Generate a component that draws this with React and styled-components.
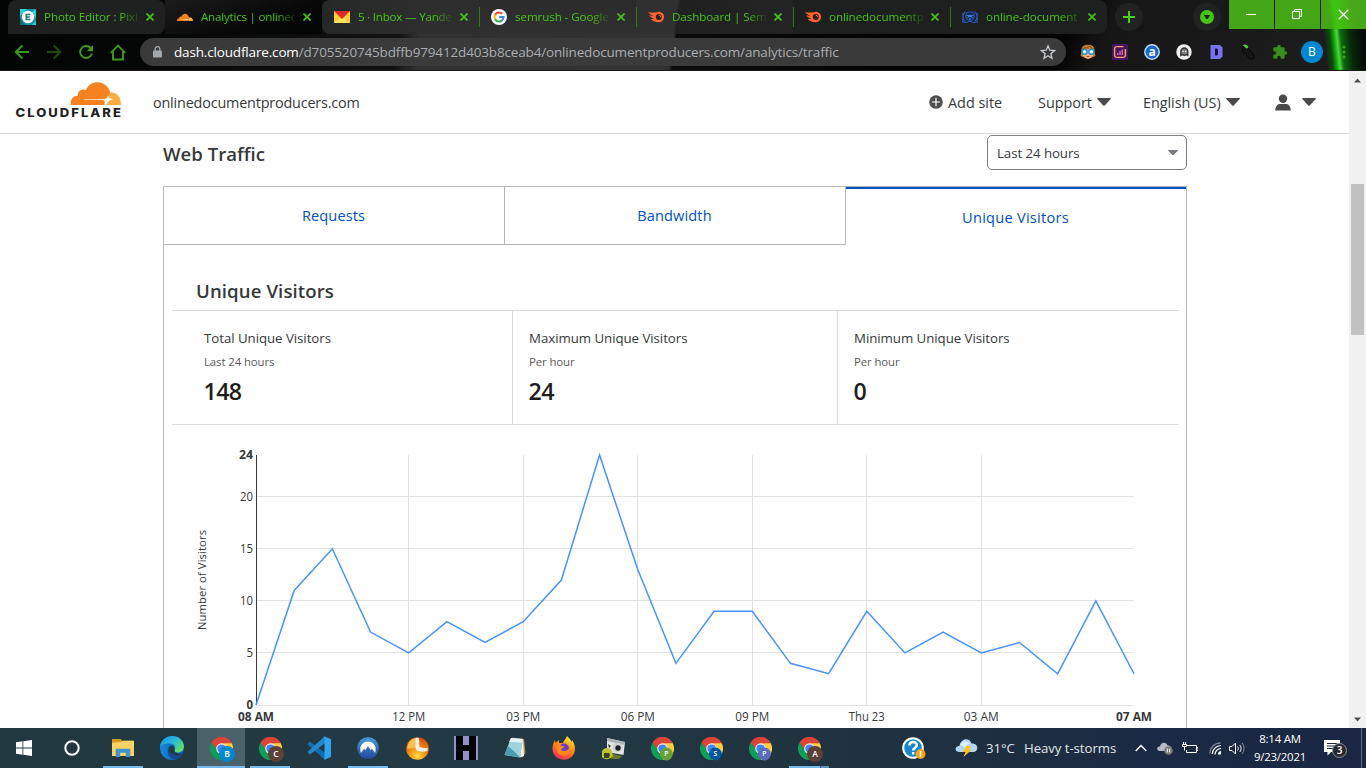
import React from "react";
import styled, { createGlobalStyle } from "styled-components";

const Global = createGlobalStyle`
  * { box-sizing: border-box; }
  html, body { margin: 0; padding: 0; overflow: hidden; }
  body { font-family: "Open Sans", "Noto Sans", sans-serif; color: #36393a; background: #fff; }
  svg { display: block; flex: none; }
`;

const Screen = styled.div`
  width: 1366px;
  height: 768px;
  display: flex;
  flex-direction: column;
  overflow: hidden;
`;

/* ---------- browser frame ---------- */
const Browser = styled.header`
  height: 71px;
  flex: none;
  display: flex;
  flex-direction: column;
  border-bottom: 1px solid #1c171b;
  background:
    linear-gradient(84deg, transparent 1320px, #0c4d0b 1326px, #12a908 1330px, #4bd93a 1333px, #0c6a0c 1337px, #082a0a 1346px, #050c06 1358px),
    linear-gradient(112deg, transparent 1000px, #161616 1040px, #1c1c1c 1240px, #161616 1330px),
    linear-gradient(98deg, #030505 0, #060707 180px, #121212 400px, #303030 420px, #333 672px, #0c0c0c 675px, #030303 900px, #050505 1366px);
`;

const TabStrip = styled.div`
  height: 34px;
  display: flex;
  padding-left: 8px;
`;

const Tab = styled.div`
  width: 157px;
  height: 34px;
  flex: none;
  display: flex;
  align-items: center;
  padding: 0 9px 0 12px;
  background: ${(p) => (p.$active ? "linear-gradient(160deg, #1c1c1c 0, #080808 60%, #030505 100%)" : p.$bg)};
  border-radius: ${(p) => p.$radius || "0"};
`;

const TabTitle = styled.span`
  width: 94px;
  margin-left: 8px;
  overflow: hidden;
  white-space: nowrap;
  font-size: 11.6px;
  line-height: 18px;
  letter-spacing: ${(p) => p.$ls || -0.08}px;
  color: #46c414;
  mask-image: linear-gradient(90deg, #000 76px, transparent 97px);
`;

const TabClose = styled.span`
  margin-left: 8px;
`;

const TabDivider = styled.span`
  width: 1px;
  height: 20px;
  margin: 7px -1px 0 0;
  flex: none;
  z-index: 1;
  background: #2f7a14;
`;

const RoundButton = styled.span`
  width: 28px;
  height: 28px;
  margin: 3px 0 0 ${(p) => p.$left}px;
  border-radius: 50%;
  background: #212323;
  display: flex;
  align-items: center;
  justify-content: center;
`;

const WindowButtons = styled.div`
  display: flex;
  gap: 1px;
  margin-left: 8px;
`;

const WindowButton = styled.span`
  width: 45px;
  height: 29px;
  display: flex;
  align-items: center;
  justify-content: center;
  padding: 0 ${(p) => (p.$bright ? 1 : 2)}px 1px 0;
  background: ${(p) => (p.$bright ? "linear-gradient(82deg,#43a517 0 10px,#3cc80f 16px,#43b813 24px,#47a71a 34px)" : "#43a517")};
`;

const Toolbar = styled.div`
  height: 36px;
  display: flex;
  align-items: center;
  padding-left: 14px;
`;

const NavIcons = styled.div`
  display: flex;
  gap: 16px;
  width: 126px;
  flex: none;
`;

const AddressBar = styled.div`
  width: 926px;
  height: 28px;
  flex: none;
  display: flex;
  align-items: center;
  padding: 0 10px 0 13px;
  border-radius: 14px;
  background: #3a3a3a;
`;

const Url = styled.span`
  flex: 1;
  margin-left: 12px;
  font-size: 13.5px;
  line-height: 20px;
  letter-spacing: -0.16px;
  color: #a9adb1;
  white-space: nowrap;
`;

const Host = styled.span`
  color: #fff;
`;

const Extensions = styled.div`
  display: flex;
  align-items: center;
  margin-left: 6px;
`;

const ExtSlot = styled.span`
  width: 32px;
  display: flex;
  justify-content: center;
`;

const Avatar = styled.span`
  width: 22px;
  height: 22px;
  border-radius: 50%;
  background: #0288d1;
  color: #fff;
  font-size: 12px;
  line-height: 22px;
  text-align: center;
`;

/* ---------- page ---------- */
const Viewport = styled.div`
  flex: 1;
  min-height: 0;
  display: flex;
`;

const Page = styled.div`
  width: 1349px;
  display: flex;
  flex-direction: column;
  overflow: hidden;
`;

const SiteHeader = styled.div`
  height: 63px;
  flex: none;
  display: flex;
  align-items: center;
  border-bottom: 1px solid #d9d9d9;
  padding-left: 15px;
`;

const Logo = styled.span`
  padding-bottom: 8px;
`;

const SiteName = styled.span`
  width: 776px;
  margin-left: 31px;
  font-size: 14.4px;
  letter-spacing: -0.18px;
`;

const HeaderItem = styled.span`
  display: flex;
  align-items: center;
  gap: ${(p) => p.$gap || 5}px;
  width: ${(p) => p.$w}px;
  font-size: 14.4px;
  letter-spacing: ${(p) => p.$ls || 0}px;
  white-space: nowrap;
`;

const Content = styled.main`
  width: 1024px;
  margin-left: 163px;
  flex: 1;
  min-height: 0;
  display: flex;
  flex-direction: column;
`;

const TitleRow = styled.div`
  height: 52px;
  flex: none;
  display: flex;
  justify-content: space-between;
  padding-top: 1px;
`;

const Title = styled.h2`
  margin: 6px 0 0;
  font-size: 18.6px;
  line-height: 26px;
  font-weight: 600;
  letter-spacing: 0;
`;

const Select = styled.div`
  width: 200px;
  height: 35px;
  display: flex;
  align-items: center;
  justify-content: space-between;
  padding: 0 8px 0 9px;
  border: 1px solid #7d7d7d;
  border-radius: 5px;
  font-size: 13.3px;
  letter-spacing: -0.08px;
`;

const Card = styled.section`
  flex: 1;
  min-height: 0;
  border: 1px solid #b6b6b6;
  border-bottom: 0;
`;

const CardTabs = styled.div`
  display: flex;
  height: 58px;
`;

const CardTab = styled.div`
  flex: 1;
  display: flex;
  align-items: center;
  justify-content: center;
  font-size: 14.6px;
  letter-spacing: ${(p) => p.$ls || 0.1}px;
  color: #0051c3;
  border-bottom: ${(p) => (p.$active ? "0" : "1px solid #b6b6b6")};
  border-top: ${(p) => (p.$active ? "2px solid #0051c3" : "0")};
  border-right: ${(p) => (p.$active ? "0" : "1px solid #b6b6b6")};
  padding: 0 1px ${(p) => (p.$active ? 0 : 2)}px 0;
`;

const SectionTitle = styled(Title)`
  margin: 33px 0 6px 32px;
  letter-spacing: 0.1px;
`;

const Stats = styled.div`
  display: grid;
  grid-template-columns: 341px 325px 340px;
  height: 115px;
  margin: 0 8px;
  border-top: 1px solid #d9d9d9;
  border-bottom: 1px solid #d9d9d9;
`;

const Stat = styled.div`
  display: flex;
  flex-direction: column;
  padding: 17px 0 0 ${(p) => (p.$first ? 32 : 16)}px;
  border-right: ${(p) => (p.$last ? "0" : "1px solid #d9d9d9")};
`;

const StatName = styled.span`
  font-size: 13.3px;
  line-height: 20px;
  letter-spacing: -0.06px;
`;

const StatPeriod = styled.span`
  margin-top: 5px;
  font-size: 11.4px;
  line-height: 17px;
  letter-spacing: -0.1px;
  color: #595959;
`;

const StatValue = styled.span`
  margin: 4px 0 0 -0.5px;
  font-size: 23.2px;
  line-height: 34px;
  font-weight: 600;
  letter-spacing: -0.6px;
  color: #1d1d1d;
`;

const ChartArea = styled.div`
  height: 303px;
`;

const Scrollbar = styled.div`
  width: 17px;
  background: #f1f1f1;
  display: flex;
  flex-direction: column;
  align-items: center;
  justify-content: space-between;
  padding: 7px 0 6px;
`;

const Track = styled.div`
  flex: 1;
  width: 13px;
  padding-top: 101px;
`;

const Thumb = styled.div`
  height: 151px;
  background: #c1c1c1;
`;

/* ---------- taskbar ---------- */
const Taskbar = styled.footer`
  height: 40px;
  flex: none;
  display: flex;
  color: #fff;
  background: linear-gradient(90deg, #22383f 0, #223a44 420px, #203440 800px, #1b2a44 1150px, #1a2642 1366px);
`;

const SystemButton = styled.span`
  width: 48px;
  display: flex;
  align-items: center;
  justify-content: center;
`;

const Apps = styled.div`
  display: flex;
  gap: 1px;
  margin-left: 3px;
`;

const AppButton = styled.span`
  position: relative;
  width: 48px;
  display: flex;
  align-items: center;
  justify-content: center;
  background: ${(p) => (p.$focused ? "#4c626a" : "transparent")};
  &::after {
    content: "";
    position: absolute;
    bottom: 0;
    height: 2px;
    left: ${(p) => (p.$focused ? 0 : 4)}px;
    right: ${(p) => (p.$focused ? 0 : 4)}px;
    background: ${(p) => (!p.$open ? "transparent" : p.$stacked ? "linear-gradient(90deg,#76b9ed 31px,#355a78 31px 32px,#5d92be 32px)" : "#76b9ed")};
  }
`;

const ProfileBadge = styled.span`
  position: absolute;
  left: 22px;
  top: 18px;
  width: 16px;
  height: 16px;
  border-radius: 50%;
  background: ${(p) => p.$color};
  font-size: 8.5px;
  font-weight: 600;
  line-height: 16px;
  text-align: center;
  transform: ${(p) => (p.$small ? "scale(0.8) translate(-2px, 0)" : "none")};
`;

const Tray = styled.div`
  flex: 1;
  display: flex;
  align-items: center;
  padding-left: 69px;
`;

const Weather = styled.span`
  display: flex;
  align-items: center;
  width: 180px;
  margin-left: 29px;
  font-size: 13.2px;
  letter-spacing: -0.05px;
  white-space: nowrap;
  color: #e2e5ea;
`;

const WeatherTemp = styled.span`
  width: 38px;
  margin-left: 7px;
`;

const TrayIcons = styled.span`
  display: flex;
  align-items: center;
  width: 111px;
`;

const TrayIcon = styled.span`
  margin-right: ${(p) => p.$gap}px;
`;

const Clock = styled.span`
  display: flex;
  flex-direction: column;
  align-items: center;
  width: 68px;
  font-size: 11.4px;
  line-height: 18px;
  letter-spacing: -0.22px;
`;

const Notifications = styled.span`
  position: relative;
  width: 24px;
  margin-left: 10px;
`;

const Count = styled.span`
  position: absolute;
  left: 8px;
  top: 3px;
  width: 15px;
  height: 15px;
  border-radius: 50%;
  border: 1px solid #8b909a;
  background: #26292e;
  font-size: 10px;
  font-weight: 600;
  line-height: 13px;
  text-align: center;
`;

const DesktopEdge = styled.span`
  align-self: stretch;
  width: 1px;
  margin-left: auto;
  margin-right: 4px;
  background: #68738a;
`;

/* ---------- icons ---------- */
const Cross = ({ color = "#46c414", size = 8, w = 1.7 }) => (
  <svg width={size} height={size} viewBox="0 0 8 8" stroke={color} strokeWidth={w}>
    <path d="M.5.5l7 7M7.5.5l-7 7" />
  </svg>
);

const Pixlr = () => (
  <svg width="16" height="16" viewBox="0 0 16 16">
    <rect width="16" height="16" fill="#13939c" />
    <path d="M0 0h7L0 7zM16 0v9l-4-6zM4 16h8l4-4v4z" fill="#28d5dc" />
    <path d="M0 9l5 7H0z" fill="#0d6c78" />
    <circle cx="8" cy="8" r="6.200" fill="#fff" />
    <path d="M10.300 5.500H6.200v5h4.100M6.200 8h3.600" fill="none" stroke="#286b75" strokeWidth="1.400" />
  </svg>
);

const CloudMini = () => (
  <svg width="16" height="16" viewBox="0 0 16 16">
    <path d="M0 12c0-1.700.800-2.600 2.200-2.700C2.200 7.800 3.600 7.300 4.500 7.800 5.500 3.600 11 3.600 12 8.300l-.500 3.700z" fill="#f6821f" />
    <path d="M11.300 12l1-3.800c2.500 0 3.700 1.500 3.700 3.800z" fill="#fbad41" />
    <path d="M4 10.500h9" stroke="#ffd8ae" strokeWidth=".6" />
  </svg>
);

const Mail = () => (
  <svg width="16" height="16" viewBox="0 0 16 16">
    <rect y="2" width="16" height="12" fill="#fc3" />
    <path d="M0 14l8-7 8 7z" fill="#ffdf5c" />
    <path d="M0 2h16L8 10z" fill="#e0292b" />
  </svg>
);

const Google = () => (
  <svg width="16" height="16" viewBox="0 0 16 16" fill="none" strokeWidth="2.100">
    <circle cx="8" cy="8" r="8" fill="#fff" />
    <path d="M11.200 4.800A4.500 4.500 0 0 0 4.100 5.800" stroke="#ea4335" />
    <path d="M4.100 5.800a4.500 4.500 0 0 0 0 4.400" stroke="#fbbc05" />
    <path d="M4.100 10.200a4.500 4.500 0 0 0 6.900 1.200" stroke="#34a853" />
    <path d="M11 11.400A4.500 4.500 0 0 0 12.500 8H8.200" stroke="#4285f4" />
  </svg>
);

const Semrush = () => (
  <svg width="16" height="16" viewBox="0 0 16 16">
    <path d="M0 3.200c4 .4 7 .3 10-.3 3.600-.4 6 2.100 6 5 0 3.200-2.600 5.400-5.300 5.400-3.700 0-6.300-1.700-8-3.400 1.500.3 2.800.2 3.400-.1C4 9.200 2.100 7.600 1.200 6.300c1.600.5 3.200.5 3.900.2C3 5.800 1.200 4.500 0 3.200z" fill="#ff622d" />
    <circle cx="10.800" cy="8" r="3" fill="#32201b" />
    <path d="M10.800 6.200A1.900 1.900 0 0 1 12.700 8" stroke="#ff622d" fill="none" />
  </svg>
);

const BlueCrest = () => (
  <svg width="16" height="16" viewBox="0 0 16 16" fill="none" stroke="#2859bc" strokeWidth="1.100">
    <path d="M3.500 2.500C.2 5 .2 9.500 3 12M12.500 2.500c3.300 2.500 3.300 7 .5 9.500M.8 4v9.200h3M15.200 4v9.200h-3M3 13.800l5-1.500 5 1.500" />
    <circle cx="8" cy="7" r="4.300" fill="#12264e" />
    <path d="M4.500 6.500h7M5.500 9l1-1.500h3l1 1.500M8 9v2" stroke="#3f78e0" />
  </svg>
);

const NavBack = ({ dim }) => (
  <svg width="16" height="16" viewBox="0 0 16 16" fill="none" stroke={dim ? "#1d4d10" : "#3d9a1c"} strokeWidth="1.900">
    <path d={dim ? "M1 8h13M7.700 1.500L14.200 8l-6.500 6.500" : "M15 8H2M8.300 1.500L1.800 8l6.500 6.500"} />
  </svg>
);

const Reload = () => (
  <svg width="16" height="16" viewBox="0 0 16 16">
    <path d="M12.700 4A6 6 0 1 0 14 9.500" fill="none" stroke="#3d9a1c" strokeWidth="1.900" />
    <path d="M15 1v6.300H8.700z" fill="#3d9a1c" />
  </svg>
);

const Home = () => (
  <svg width="16" height="17" viewBox="0 0 16 17" fill="none" stroke="#3d9a1c" strokeWidth="1.900">
    <path d="M.8 8.800L8 1.600l7.200 7.200M3 7v8.500h10V7" />
  </svg>
);

const Lock = () => (
  <svg width="9" height="12" viewBox="0 0 9 12">
    <path d="M2.200 5V3a2.300 2.300 0 0 1 4.600 0v2" fill="none" stroke="#a2a7ad" strokeWidth="1.300" />
    <rect y="4.500" width="9" height="7" rx="1" fill="#a2a7ad" />
  </svg>
);

const Star = () => (
  <svg width="16" height="16" viewBox="0 0 24 24" fill="none" stroke="#c6cacf" strokeWidth="2">
    <path d="M12 2.800l2.700 6.500 7 .6-5.300 4.600 1.600 6.900-6-3.700-6 3.700 1.600-6.900L2.300 9.900l7-.6z" />
  </svg>
);

const Owl = () => (
  <svg width="16" height="16" viewBox="0 0 16 16">
    <path d="M1.500 7C1 2.500 4 .8 8 .8S15 2.500 14.500 7l1 5-2.500 1-5 2.200L3 13l-2.500-1z" fill="#c07a30" />
    <path d="M3 7c1-2 9-2 10 0v4.500c-2 4-8 4-10 0z" fill="#efb580" />
    <path d="M2.500 4.500c3-.5 6-1 7.500-2.500.5 2 2 2.500 3.500 2.800" stroke="#8a4d1b" fill="none" />
    <circle cx="4.600" cy="7.800" r="2.500" fill="#f0f8fc" stroke="#2492d1" strokeWidth="1.500" />
    <circle cx="11.400" cy="7.800" r="2.500" fill="#f0f8fc" stroke="#2492d1" strokeWidth="1.500" />
    <path d="M6.500 12.500h3" stroke="#a3522b" />
  </svg>
);

const Bars = () => (
  <svg width="16" height="16" viewBox="0 0 16 16" fill="none">
    <rect width="16" height="16" rx="1.500" fill="#4a1657" />
    <path d="M11.500 2.600h-7A2 2 0 0 0 2.600 4.500v7a2 2 0 0 0 1.900 1.900h7a2 2 0 0 0 1.900-1.900V5" stroke="#f4a17b" strokeWidth="1.400" />
    <path d="M5.700 11V9M8 11V7M10.300 11V5.500" stroke="#e86fae" strokeWidth="1.300" />
  </svg>
);

const Circled = ({ fill, ring, color, letter }) => (
  <svg width="16" height="16" viewBox="0 0 16 16">
    <circle cx="8" cy="8" r="7.200" fill={fill} stroke={ring} strokeWidth="1.500" />
    <text x="8" y="11.800" textAnchor="middle" fontFamily="Open Sans" fontWeight="700" fontSize="12" fill={color}>{letter}</text>
  </svg>
);

const Ghost = () => (
  <svg width="16" height="16" viewBox="0 0 16 16">
    <circle cx="8" cy="8" r="7.700" fill="#efefef" />
    <path d="M4.800 11.500V7.500a3.500 3.500 0 0 1 7 0v4l-1.800-.8-1.700.8-1.700-.8z" fill="#777" stroke="#333" strokeWidth="1.300" />
    <path d="M6.500 7.500h1.300M9 7.500h1.300" stroke="#eee" strokeWidth="1.500" />
  </svg>
);

const PurpleD = () => (
  <svg width="13" height="16" viewBox="0 0 13 16">
    <path d="M.5 1H10l2.500 2.500v9L10 15H.5z" fill="#7b70f2" />
    <path d="M5 4.500h2l1 1v5l-1 1H5z" fill="#17123d" />
  </svg>
);

const Mouse = () => (
  <svg width="16" height="16" viewBox="0 0 16 16">
    <path d="M3 3c2-2 4-.8 6 2l5 6c2 3-2 5.500-4.500 3.500L3.500 8C2 6 1.500 4.500 3 3z" fill="#151515" stroke="#060606" />
    <path d="M3 1.500C4.500-.5 7 1 8.500 3L6.800 4.800z" fill="#43e12b" />
  </svg>
);

const Puzzle = () => (
  <svg width="16" height="16" viewBox="0 0 24 24">
    <path d="M20.500 11H19V7a2 2 0 0 0-2-2h-4V3.500a2.500 2.500 0 0 0-5 0V5H4a2 2 0 0 0-2 2v3.800h1.500a2.700 2.700 0 0 1 0 5.400H2V20c0 1.100.9 2 2 2h3.800v-1.500a2.700 2.700 0 0 1 5.400 0V22H17a2 2 0 0 0 2-2v-4h1.500a2.500 2.500 0 0 0 0-5z" fill="#3a8e1d" />
  </svg>
);

const Dots = () => (
  <svg width="4" height="14" viewBox="0 0 4 14" fill="#3ea01a">
    <circle cx="2" cy="2" r="1.500" /><circle cx="2" cy="7" r="1.500" /><circle cx="2" cy="12" r="1.500" />
  </svg>
);

const CloudflareLogo = () => (
  <svg width="107" height="40" viewBox="0 0 107 40" overflow="visible">
    <path d="M55.800 27c-.6-5.500 2-9 7-9.200-.3-4.700 4.200-7.900 8-5.500C73.200 6.500 77.500 4.200 82.500 4.200c6.700 0 12 5 12.700 11l-.8 4.500L91 27z" fill="#f6821f" />
    <path d="M95.300 14.500c6.300-.8 10.900 4.500 10.700 12.500H90.500l2-6z" fill="#fbad41" />
    <path d="M69 21.200h19.500c2.800 0 4-1.200 4.600-4.100.5 2.600 1.600 4 5.900 4.100-3.500.2-5.700 1.600-7.600 5.800h-2c.8-3.500.2-4.800-2.900-4.900L69 21.800z" fill="#fff" />
    <text x=".500" y="39.300" textLength="107.500" lengthAdjust="spacingAndGlyphs" fontFamily="Inter, sans-serif" fontWeight="800" fontSize="11.600" letterSpacing="1.800" fill="#222">CLOUDFLARE</text>
  </svg>
);

const Caret = ({ w = 14, h = 8, color = "#4a4a4a" }) => (
  <svg width={w} height={h} viewBox="0 0 14 8" preserveAspectRatio="none">
    <path d="M.8 0h12.400c.7 0 1 .6.500 1.100L7.700 7.600a1 1 0 0 1-1.400 0L.3 1.100C-.200.6.100 0 .8 0z" fill={color} />
  </svg>
);

const PlusDisc = () => (
  <svg width="14" height="14" viewBox="0 0 14 14">
    <circle cx="7" cy="7" r="6.800" fill="#4d4d4d" />
    <path d="M7 2.800v8.400M2.800 7h8.400" stroke="#fff" strokeWidth="1.200" />
  </svg>
);

const Person = () => (
  <svg width="16" height="17" viewBox="0 0 16 17" fill="#4a4a4a">
    <circle cx="8" cy="4.800" r="4.200" />
    <path d="M.3 16.500c0-4.500 2.600-6.400 5-6.400h5.400c2.400 0 5 1.900 5 6.400z" />
  </svg>
);

const ScrollArrow = ({ down }) => (
  <svg width="7" height="5" viewBox="0 0 7 5">
    <path d={down ? "M0 .5h7L3.500 4.500z" : "M0 4.500h7L3.500.5z"} fill="#505050" />
  </svg>
);

const Windows = () => (
  <svg width="16" height="16" viewBox="0 0 16 16" fill="#fff">
    <path d="M0 2.200l6.500-.9v6.300H0zM7.300 1.200L16 0v7.600H7.300zM0 8.400h6.500v6.300L0 13.800zM7.300 8.400H16V16l-8.700-1.200z" />
  </svg>
);

const Cortana = () => (
  <svg width="16" height="16" viewBox="0 0 16 16">
    <circle cx="8" cy="8" r="6.700" fill="none" stroke="#fff" strokeWidth="2" />
  </svg>
);

const Folder = () => (
  <svg width="22" height="20" viewBox="0 0 22 20">
    <path d="M0 1h8.500l1.500 1.700h11V6H0z" fill="#d8971d" />
    <path d="M0 4.700L8.500 4l2-1.300H22V18H0z" fill="#fbd364" />
    <path d="M3.700 19v-8.200h14.600V19h-4.500v-4.200H8.200V19z" fill="#3f93d1" />
  </svg>
);

const Edge = () => (
  <svg width="24" height="24" viewBox="0 0 24 24">
    <defs>
      <linearGradient id="edgeTop" x1="0" x2="1" y1="0" y2=".7"><stop offset="0" stopColor="#1b8fe0" /><stop offset=".5" stopColor="#27b5df" /><stop offset="1" stopColor="#62e06a" /></linearGradient>
      <linearGradient id="edgeLow" x1="0" x2="1"><stop offset="0" stopColor="#1687dd" /><stop offset="1" stopColor="#0b55a5" /></linearGradient>
    </defs>
    <circle cx="12" cy="12" r="12" fill="url(#edgeLow)" />
    <path d="M0 11C1 4 6 0 12.300 0 19 0 24 5 24 10.500c0 3.800-2.700 6-6 6-2.500 0-4.300-1-3.500-2.300 1.300-2 .9-6.200-4-6.700C5.500 7 1.500 8 0 11z" fill="url(#edgeTop)" />
    <path d="M8.500 13c-.6 5 4.500 8.500 9.500 7 2-.6 3.600-1.200 4.400-2-1.200-.4-7 .6-7.900-3.800C15 12 13.500 9.500 11.500 9.800 9.800 10 8.700 11.300 8.500 13z" fill="#223a44" />
    <path d="M8.300 12C6 18 10 23.500 15 23.600c3-1 5.700-3 7.300-5.600-4.500 3.600-13 1.300-14-6z" fill="#174b91" />
  </svg>
);

const Chrome = () => (
  <svg width="23" height="23" viewBox="0 0 24 24">
    <path d="M1.600 6A12 12 0 0 1 22.400 6L12 8.500 7.500 15z" fill="#db4437" />
    <path d="M22.400 6A12 12 0 0 1 12 24l-1-6.500L16.500 9 12 6.500z" fill="#ffcd40" />
    <path d="M1.600 6A12 12 0 0 0 12 24l5.200-9-8 1z" fill="#0f9d58" />
    <path d="M12 6.500h10.700a12 12 0 0 0-.3-.5A12 12 0 0 0 2 5.500z" fill="#db4437" />
    <circle cx="12" cy="12" r="5.500" fill="#f1f1f1" />
    <circle cx="12" cy="12" r="4.300" fill="#4285f4" />
  </svg>
);

const VSCode = () => (
  <svg width="24" height="24" viewBox="0 0 24 24">
    <path d="M18 24v-7L3 5.500.3 8z" fill="#1070b3" />
    <path d="M18 0v7L3 18.500.3 16z" fill="#2489ca" />
    <path d="M17.500.2l6.500 3v17.600l-6.500 3z" fill="#2fa4f2" />
  </svg>
);

const NordVpn = () => (
  <svg width="22" height="22" viewBox="0 0 22 22">
    <defs><linearGradient id="nord" x1="0" x2="0" y1="0" y2="1"><stop offset="0" stopColor="#4b9bd2" /><stop offset="1" stopColor="#2447a0" /></linearGradient></defs>
    <circle cx="11" cy="11" r="10.800" fill="url(#nord)" />
    <path d="M4 16C1.500 9 6 4.500 11 4.500S20.500 9 18 16l-3-4.500-1.200 1.700L11 9l-2.800 4.200L7 11.500z" fill="#fff" />
  </svg>
);

const OrangeClock = () => (
  <svg width="23" height="23" viewBox="0 0 23 23">
    <defs><radialGradient id="orb" cx=".5" cy=".85" r=".8"><stop offset="0" stopColor="#ffdc43" /><stop offset=".5" stopColor="#f58c12" /><stop offset="1" stopColor="#d94f0a" /></radialGradient></defs>
    <circle cx="11.500" cy="11.500" r="11.300" fill="url(#orb)" />
    <path d="M1.500 12C1 5 6 1 10 1.300v9.200z" fill="#ffbf50" />
    <path d="M9.500 1c1.300-.4 2.500-.3 3.500 0l.5 9c2.500 1.300 5.500 1.300 8 .8.3 1.200.2 2-.2 3.200-4 1-8 .8-10.300-.5-1.500-1-1.500-2.500-1.500-4.500z" fill="#f4f0ee" />
  </svg>
);

const LetterH = () => (
  <svg width="24" height="24" viewBox="0 0 24 24">
    <rect width="24" height="24" fill="#9490cb" />
    <path d="M2 0h7v9h6V0h7v24h-7v-9H9v9H2z" fill="#050507" />
  </svg>
);

const Notepad = () => (
  <svg width="24" height="24" viewBox="0 0 24 24">
    <path d="M9 1.500L21 3l1.500 14L19 22z" fill="#b68d55" />
    <path d="M8 2l12 1-3 18.500L1.500 19z" fill="#9ed3de" />
    <path d="M8 2l12 1-1 3.500L6 6z" fill="#e4f2f5" />
    <path d="M5 10l8 7 4 4.500L1.500 19z" fill="#4c9db2" />
    <path d="M20 3l1 17-4 1.500z" fill="#f1f4f4" />
  </svg>
);

const Firefox = () => (
  <svg width="24" height="24" viewBox="0 0 24 24">
    <defs><linearGradient id="fox" x1=".8" x2=".3" y1="0" y2="1"><stop offset="0" stopColor="#fff44f" /><stop offset=".4" stopColor="#ff980e" /><stop offset="1" stopColor="#f5295b" /></linearGradient></defs>
    <path d="M3 4l.5 3L7 4v3h4c1-3 3-4 4-7 2 2 4 4 4.500 6l.5-2c3 4 3.500 8 2.500 12-1.500 5-6 7.700-10.500 7.700C5.500 23.700.5 19 .5 13 .5 9 1.500 6.500 3 4z" fill="url(#fox)" />
    <circle cx="12" cy="12.500" r="5" fill="#6b3fd0" />
    <path d="M4.500 10c3-2 5 0 8 .5-1 2-2.500 1.500-3.500 3 2 3 7 1.500 8.500-2 .5 5-2.500 8-6 8C7 19.500 4 15 4.500 10z" fill="#ff8b16" />
  </svg>
);

const Camera = () => (
  <svg width="25" height="24" viewBox="0 0 25 24">
    <path d="M6 2l18 4-1.500 13L6 16z" fill="#e2e3e4" />
    <path d="M6 2l18 4-.5 3L6 5z" fill="#aeb1b3" />
    <circle cx="16.500" cy="11.500" r="4.800" fill="#cfd1d3" />
    <circle cx="17" cy="12" r="2.700" fill="#202326" />
    <path d="M7 8l3 2-2 2z" fill="#333" />
    <path d="M12 18l9 2-3 3h-8z" fill="#6d7728" />
    <path d="M1 15c2-4 8-4 10 0l1 5c-3 4-9 4-11 1z" fill="#bdc532" />
    <path d="M3 17h5l1 1.500-1 3.500H3z" fill="#3b4319" />
  </svg>
);

const Help = () => (
  <svg width="24" height="23" viewBox="0 0 24 23">
    <circle cx="11" cy="11" r="9.800" fill="#1686ca" stroke="#fff" strokeWidth="2" />
    <path d="M7.500 8.500C7.500 3.800 14.800 4 14.800 8c0 2.800-3.600 2.500-3.600 5.500M11.200 15v2.500" fill="none" stroke="#fff" strokeWidth="2.500" />
    <circle cx="18.500" cy="17" r="5" fill="#f2a51e" />
    <path d="M18.500 14v6" stroke="#fff4d0" strokeWidth="1.500" />
  </svg>
);

const Storm = () => (
  <svg width="24" height="20" viewBox="0 0 24 20">
    <path d="M5.500 14C-1.500 14.500-.500 7.500 4.500 8 5.500-.5 15-.8 16.500 5.500c7.500-.5 7.500 8.500 1.500 8.500z" fill="#b3d6f5" />
    <path d="M5 8c2-5 7-6 10-2-4 0-4 3-5 4-1-2-3-3-5-2z" fill="#e4f1fc" />
    <path d="M11.500 8H16l-2 3.500h3L8.500 19l2-5H7.700z" fill="#ffc021" />
  </svg>
);

const ChevronUp = () => (
  <svg width="12" height="8" viewBox="0 0 12 8"><path d="M.7 7L6 1.500 11.300 7" fill="none" stroke="#fff" strokeWidth="1.300" /></svg>
);

const OneDrive = () => (
  <svg width="17" height="13" viewBox="0 0 17 13">
    <path d="M3 9C-1 9-.5 4 3 4.500 4-.5 9.500 0 10.500 3.500 14 3 15 6 14.500 9z" fill="#b9bdc3" />
    <circle cx="11.500" cy="8.500" r="4.300" fill="#77797c" />
    <path d="M10.300 6.500v4M12.700 6.500v4" stroke="#fff" />
  </svg>
);

const Battery = () => (
  <svg width="16" height="13" viewBox="0 0 16 13" fill="none" stroke="#fff" strokeWidth="1">
    <path d="M5 3.500h9.500v7h-10V8M14.500 5.500H16v3h-1.500M1.500 0v2M3.500 0v2M.5 2.500h4v2h-4zM2.500 4.500v4" />
  </svg>
);

const Wifi = () => (
  <svg width="13" height="13" viewBox="0 0 13 13" fill="none" strokeWidth="1.200">
    <path d="M.8 11.500C1 5.500 5.500 1 11.700.8" stroke="#7e8799" />
    <path d="M3.300 12C3.500 7.500 7 3.800 12 3.500M6 12.500C6 9.500 8.500 6.700 12 6.500" stroke="#fff" />
    <path d="M12 9a3 3 0 0 0-3 3.500h3z" fill="#fff" />
  </svg>
);

const Volume = () => (
  <svg width="17" height="13" viewBox="0 0 17 13" fill="none" stroke="#fff" strokeWidth="1">
    <path d="M.5 4.500H3L6.500 1v11L3 8.500H.5zM8.500 4.500c1 1.200 1 2.800 0 4M10.800 3c1.700 2 1.700 5 0 7" />
    <path d="M13 1c2.700 3 2.700 8 0 11" stroke="#8991a2" />
  </svg>
);

const Message = () => (
  <svg width="17" height="17" viewBox="0 0 17 17">
    <path d="M0 0h16v12H7l-3.500 3.500V12H0z" fill="#fff" />
    <path d="M3 3.500h10M3 6h10M3 8.500h6" stroke="#1b2742" />
  </svg>
);

/* ---------- chart ---------- */
const visitors = [0, 11, 15, 7, 5, 8, 6, 8, 12, 24, 13, 4, 9, 9, 4, 3, 9, 5, 7, 5, 6, 3, 10, 3];
const hours = [
  { i: 0, label: "08 AM", w: 36, bold: true },
  { i: 4, label: "12 PM", w: 33 },
  { i: 7, label: "03 PM", w: 34 },
  { i: 10, label: "06 PM", w: 34 },
  { i: 13, label: "09 PM", w: 34 },
  { i: 16, label: "Thu 23", w: 36 },
  { i: 19, label: "03 AM", w: 35 },
  { i: 23, label: "07 AM", w: 36, bold: true },
];
const left = 92;
const bottom = 280;
const xAt = (i) => left + (i * 878) / 23;
const yAt = (v) => bottom - (v * 250) / 24;

const Chart = () => (
  <svg width="1022" height="303" viewBox="0 0 1022 303" fontFamily="Open Sans, sans-serif" fontSize="11.800" fill="#36393a">
    <g stroke="#e2e2e2" shapeRendering="crispEdges">
      {[0, 5, 10, 15, 20].map((v) => <path key={v} d={`M${left} ${Math.floor(yAt(v)) + 0.5}H970`} />)}
      {hours.slice(1, -1).map(({ i }) => <path key={i} d={`M${Math.floor(xAt(i)) + 0.5} 30V280`} />)}
      <path d="M92.500 30V280" stroke="#36393a" />
    </g>
    <polyline points={visitors.map((v, i) => `${xAt(i)},${yAt(v)}`).join(" ")} fill="none" stroke="#4693ff" strokeWidth="1.500" />
    {[0, 5, 10, 15, 20, 24].map((v) => (
      <text key={v} x="89" y={yAt(v) + 4} textAnchor="end" textLength={v === 24 ? 14 : v > 9 ? 13 : 6.5} lengthAdjust="spacingAndGlyphs" fontWeight={v % 24 ? 400 : 700}>{v}</text>
    ))}
    {hours.map(({ i, label, w, bold }) => (
      <text key={i} x={xAt(i)} y="296" textAnchor="middle" textLength={w} lengthAdjust="spacingAndGlyphs" fontWeight={bold ? 700 : 400}>{label}</text>
    ))}
    <text transform="translate(42 155) rotate(-90)" textAnchor="middle" fontSize="11.200" textLength="100" lengthAdjust="spacing">Number of Visitors</text>
  </svg>
);

const grey = "linear-gradient(180deg, #2b2b2b, #303030)";
const tabs = [
  { icon: <Pixlr />, title: "Photo Editor : Pixl", bg: "#1f2020", radius: "8px 8px 8px 0" },
  { icon: <CloudMini />, title: "Analytics | onlinec", active: true, ls: -0.22 },
  { icon: <Mail />, title: "5 · Inbox — Yande", bg: "linear-gradient(100deg, #262727, #2e2e2e 70%)", radius: "8px 0 0 8px", divider: true, ls: -0.22 },
  { icon: <Google />, title: "semrush - Google", bg: grey, divider: true },
  { icon: <Semrush />, title: "Dashboard | Sem", bg: "linear-gradient(98deg, #303030 41px, #202020 44px, #242424)", divider: true },
  { icon: <Semrush />, title: "onlinedocumentp", bg: "#1e1f1f", divider: true },
  { icon: <BlueCrest />, title: "online-document", bg: "#1e1f1f", radius: "0 8px 8px 0" },
];

const apps = [
  { icon: <Folder />, open: true },
  { icon: <Edge /> },
  { icon: <Chrome />, open: true, focused: true, badge: ["B", "#0288d1"] },
  { icon: <Chrome />, open: true, badge: ["C", "#5d4037"] },
  { icon: <VSCode /> },
  { icon: <NordVpn />, open: true },
  { icon: <OrangeClock /> },
  { icon: <LetterH /> },
  { icon: <Notepad /> },
  { icon: <Firefox /> },
  { icon: <Camera /> },
  { icon: <Chrome />, badge: ["P", "#689f38"], small: true },
  { icon: <Chrome />, badge: ["S", "#01579b"], small: true },
  { icon: <Chrome />, badge: ["P", "#5c6bc0"], small: true },
  { icon: <Chrome />, open: true, stacked: true, badge: ["A", "#5d4037"] },
];

const trayIcons = [
  [<ChevronUp />, 10],
  [<OneDrive />, 8],
  [<Battery />, 11],
  [<Wifi />, 7],
  [<Volume />, 0],
];

const stats = [
  { name: "Total Unique Visitors", period: "Last 24 hours", value: 148 },
  { name: "Maximum Unique Visitors", period: "Per hour", value: 24 },
  { name: "Minimum Unique Visitors", period: "Per hour", value: 0 },
];

const extensions = [
  <Owl />, <Bars />, <Circled fill="#1868cc" ring="#b9dcf5" color="#fff" letter="a" />, <Ghost />,
  <PurpleD />, <Mouse />, <Puzzle />, <Avatar>B</Avatar>, <Dots />,
];

export default function App() {
  return (
    <Screen>
      <Global />
      <Browser>
        <TabStrip>
          {tabs.map((t, i) => (
            <React.Fragment key={i}>
              <Tab $active={t.active} $bg={t.bg} $radius={t.radius}>
                {t.icon}
                <TabTitle $ls={t.ls}>{t.title}</TabTitle>
                <TabClose><Cross /></TabClose>
              </Tab>
              {t.divider && <TabDivider />}
            </React.Fragment>
          ))}
          <RoundButton $left={8}>
            <svg width="12" height="12" viewBox="0 0 12 12" stroke="#4bd313" strokeWidth="2"><path d="M6 0v12M0 6h12" /></svg>
          </RoundButton>
          <RoundButton $left={50}>
            <svg width="14" height="14" viewBox="0 0 14 14"><circle cx="7" cy="7" r="7" fill="#45c414" /><path d="M4.500 5.500h5L7 9z" fill="#182315" stroke="#182315" /></svg>
          </RoundButton>
          <WindowButtons>
            <WindowButton><svg width="10" height="1"><path d="M0 .5h10" stroke="#fff" /></svg></WindowButton>
            <WindowButton><svg width="10" height="10" viewBox="0 0 10 10" fill="none" stroke="#fff"><path d="M.5 2.500h7v7h-7zM2.500 2.500v-2h7v7h-2" /></svg></WindowButton>
            <WindowButton $bright><Cross color="#fff" size={11} w={0.9} /></WindowButton>
          </WindowButtons>
        </TabStrip>
        <Toolbar>
          <NavIcons><NavBack /><NavBack dim /><Reload /><Home /></NavIcons>
          <AddressBar>
            <Lock />
            <Url><Host>dash.cloudflare.com</Host>/d705520745bdffb979412d403b8ceab4/onlinedocumentproducers.com/analytics/traffic</Url>
            <Star />
          </AddressBar>
          <Extensions>{extensions.map((e, i) => <ExtSlot key={i}>{e}</ExtSlot>)}</Extensions>
        </Toolbar>
      </Browser>

      <Viewport>
        <Page>
          <SiteHeader>
            <Logo><CloudflareLogo /></Logo>
            <SiteName>onlinedocumentproducers.com</SiteName>
            <HeaderItem $w={109}><PlusDisc />Add site</HeaderItem>
            <HeaderItem $w={105}>Support<Caret /></HeaderItem>
            <HeaderItem $w={132} $ls={-0.05}>English (US)<Caret /></HeaderItem>
            <HeaderItem $w={60} $gap={11}><Person /><Caret /></HeaderItem>
          </SiteHeader>
          <Content>
            <TitleRow>
              <Title>Web Traffic</Title>
              <Select>Last 24 hours<Caret w={10} h={5.5} color="#777b80" /></Select>
            </TitleRow>
            <Card>
              <CardTabs>
                <CardTab>Requests</CardTab>
                <CardTab>Bandwidth</CardTab>
                <CardTab $active $ls={0.25}>Unique Visitors</CardTab>
              </CardTabs>
              <SectionTitle>Unique Visitors</SectionTitle>
              <Stats>
                {stats.map((s, i) => (
                  <Stat key={s.name} $first={i === 0} $last={i === 2}>
                    <StatName>{s.name}</StatName>
                    <StatPeriod>{s.period}</StatPeriod>
                    <StatValue>{s.value}</StatValue>
                  </Stat>
                ))}
              </Stats>
              <ChartArea><Chart /></ChartArea>
            </Card>
          </Content>
        </Page>
        <Scrollbar>
          <ScrollArrow />
          <Track><Thumb /></Track>
          <ScrollArrow down />
        </Scrollbar>
      </Viewport>

      <Taskbar>
        <SystemButton><Windows /></SystemButton>
        <SystemButton><Cortana /></SystemButton>
        <Apps>
          {apps.map((a, i) => (
            <AppButton key={i} $open={a.open} $focused={a.focused} $stacked={a.stacked}>
              {a.icon}
              {a.badge && <ProfileBadge $color={a.badge[1]} $small={a.small}>{a.badge[0]}</ProfileBadge>}
            </AppButton>
          ))}
        </Apps>
        <Tray>
          <Help />
          <Weather><Storm /><WeatherTemp>31°C</WeatherTemp>Heavy t-storms</Weather>
          <TrayIcons>
            {trayIcons.map(([icon, gap], i) => <TrayIcon key={i} $gap={gap}>{icon}</TrayIcon>)}
          </TrayIcons>
          <Clock><span>8:14 AM</span><span>9/23/2021</span></Clock>
          <Notifications><Message /><Count>3</Count></Notifications>
          <DesktopEdge />
        </Tray>
      </Taskbar>
    </Screen>
  );
}
